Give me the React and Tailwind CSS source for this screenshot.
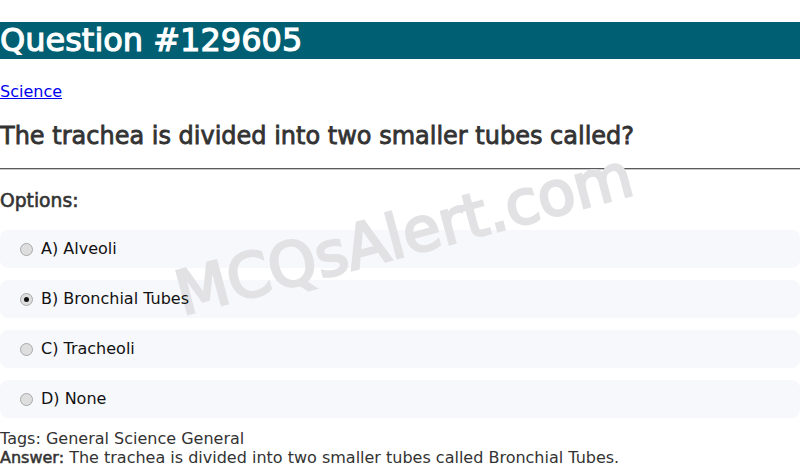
import React from "react";

const font = { fontFamily: '"DejaVu Sans", Verdana, sans-serif' };

function Radio({ checked }) {
  return (
    <span className="relative z-20 inline-flex w-[13px] h-[13px] shrink-0 items-center justify-center rounded-full border border-[#a9a9a9] bg-[#dedede]">
      {checked && <span className="block w-[5px] h-[5px] rounded-full bg-[#111]" />}
    </span>
  );
}

const options = [
  { label: "A) Alveoli", checked: false },
  { label: "B) Bronchial Tubes", checked: true },
  { label: "C) Tracheoli", checked: false },
  { label: "D) None", checked: false },
];

export default function App() {
  return (
    <div className="relative w-[800px] h-[467px] overflow-hidden bg-white" style={font}>
      <div className="flex flex-col">
        <h1 className="mt-[22px] h-[37px] bg-[#005f73] text-white text-[32px] leading-[37px] font-normal [-webkit-text-stroke:1.1px_white] whitespace-nowrap">
          Question #129605
        </h1>
        <p className="mt-[23px] h-[19px] text-[16px] leading-[19px]">
          <a href="#" className="text-[#0000ee] underline">Science</a>
        </p>
        <h2 className="mt-[21px] h-[28px] text-[24px] leading-[28px] text-[#333] font-normal [-webkit-text-stroke:0.8px_#333] whitespace-nowrap">
          The trachea is divided into two smaller tubes called?
        </h2>
        <hr className="mt-[18px] h-[2px] border-0 border-t border-t-[#5a5a5a] border-b border-b-[#c8c8c8]" />
        <h3 className="mt-[20px] h-[22px] text-[18.72px] leading-[22px] text-[#333] font-normal [-webkit-text-stroke:0.6px_#333]">
          Options:
        </h3>
        <div className="mt-[18px] flex flex-col gap-[12px]">
          {options.map((o) => (
            <label
              key={o.label}
              className="flex h-[38px] items-center gap-[8px] rounded-[8px] bg-[#f7f8fc] pl-[20px] text-[16px] text-[#111]"
            >
              <Radio checked={o.checked} />
              <span className="relative z-20">{o.label}</span>
            </label>
          ))}
        </div>
        <div className="relative z-20 mt-[12px] text-[16px] leading-[18.6px] text-[#333]">
          <div>Tags: General Science General</div>
          <div>
            <span className="[-webkit-text-stroke:0.5px_#333]">Answer:</span> The trachea is divided into two smaller tubes called Bronchial Tubes.
          </div>
        </div>
      </div>
      <div className="pointer-events-none absolute z-10 left-[404px] top-[234px] -translate-x-1/2 -translate-y-1/2 -rotate-[15deg] whitespace-nowrap text-[61px] leading-none text-[#e2e2e4] [-webkit-text-stroke:2.6px_#e2e2e4]">
        MCQsAlert.com
      </div>
    </div>
  );
}
